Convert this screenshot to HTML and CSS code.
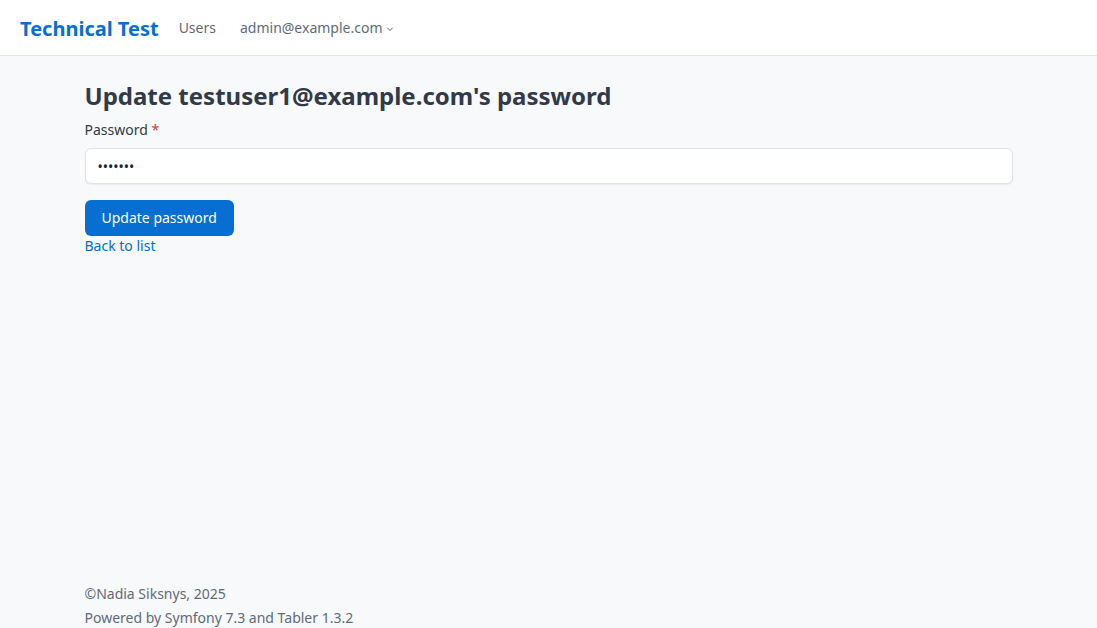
FILE: index.html
```html
<!DOCTYPE html>
<html lang="en">
<head>
<meta charset="utf-8">
<title>Technical Test</title>
<link rel="stylesheet" href="styles.css">
</head>
<body>
<div class="page">
  <header class="navbar">
    <a class="brand" href="#">Technical Test</a>
    <nav class="nav">
      <a class="nav-link" href="#">Users</a>
      <a class="nav-link dropdown" href="#">admin@example.com
        <svg class="chev" width="8" height="8" viewBox="0 0 8 8"><path d="M1.5 3 L4 5.5 L6.5 3" fill="none" stroke="currentColor" stroke-width="1" stroke-linecap="round" stroke-linejoin="round"/></svg>
      </a>
    </nav>
  </header>
  <main class="main">
    <div class="container">
      <h1 class="title">Update testuser1@example.com's password</h1>
      <form class="form">
        <label class="label" for="pw">Password <span class="req">*</span></label>
        <input class="input" id="pw" type="password" value="1234567">
        <button class="btn" type="button">Update password</button>
      </form>
      <a class="back" href="#">Back to list</a>
    </div>
  </main>
  <footer class="footer">
    <div class="container">
      <div class="foot-line">©Nadia Siksnys, 2025</div>
      <div class="foot-line">Powered by Symfony 7.3 and Tabler 1.3.2</div>
    </div>
  </footer>
</div>
</body>
</html>
```
FILE: styles.css
```css
* { box-sizing: border-box; }
html, body { margin: 0; padding: 0; height: 100%; }
body {
  font-family: "Noto Sans", "Open Sans", sans-serif;
  font-size: 14px;
  line-height: 20px;
  color: #182433;
  background: #f8f9fb;
}
.page { min-height: 100%; display: flex; flex-direction: column; }
.navbar {
  height: 56px;
  background: #fff;
  border-bottom: 1px solid #e2e6ec;
  display: flex;
  align-items: center;
  padding: 0 20px;
}
.brand {
  font-size: 20px;
  font-weight: 700;
  color: #066fd1;
  text-decoration: none;
  margin-right: 8px;
  padding-top: 2px;
}
.nav { display: flex; align-items: center; }
.nav-link {
  color: #5f6b7a;
  text-decoration: none;
  font-size: 14px;
  padding: 0 12px;
  display: flex;
  align-items: center;
}
.chev { margin-left: 3px; margin-top: 2px; }
.main { flex: 1; }
.container { width: 928px; margin: 0 auto; }
.title {
  font-size: 24px;
  line-height: 32px;
  font-weight: 700;
  color: #323a4a;
  margin: 24px 0 8px;
}
.form { display: flex; flex-direction: column; align-items: flex-start; }
.label { font-size: 14px; color: #323a4a; margin-bottom: 8px; }
.req { color: #d63939; }
.input {
  width: 100%;
  height: 36px;
  border: 1px solid #dfe3e9;
  border-radius: 6px;
  background: #fff;
  box-shadow: 0 1px 1px rgba(24,36,51,0.06);
  padding: 0 12px;
  font-family: inherit;
  font-size: 14px;
  color: #182433;
  margin-bottom: 16px;
}
.btn {
  height: 36px;
  padding: 0 17px 2px;
  border: none;
  border-radius: 6px;
  background: #066fd1;
  color: #fff;
  font-family: inherit;
  font-size: 14px;
  cursor: pointer;
}
.back {
  display: inline-block;
  color: #066fd1;
  text-decoration: none;
}
.footer { padding: 13px 0 0; margin-bottom: -2px; }
.foot-line { color: #5f6b7a; line-height: 24px; }
```
